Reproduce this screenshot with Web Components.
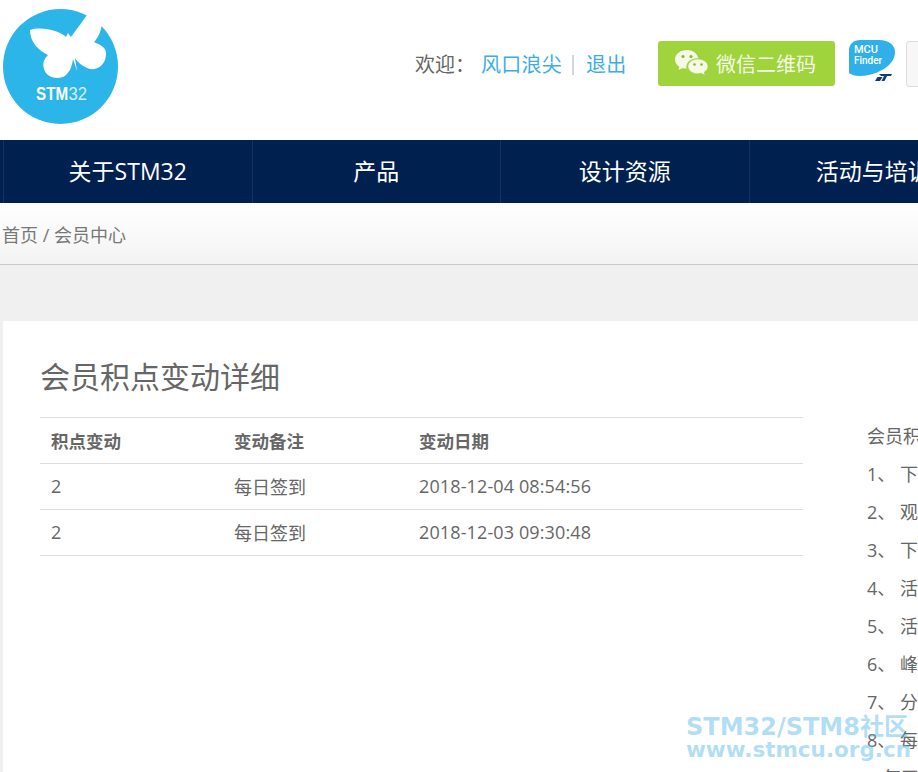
<!DOCTYPE html>
<html lang="zh">
<head>
<meta charset="utf-8">
<title>会员积点变动详细</title>
<style>
  html, body { margin: 0; height: 772px; overflow: hidden; background: #fff; }
  body { font-family: "Open Sans", "Noto Sans CJK SC", sans-serif; color: #666; }
</style>
</head>
<body>
<site-header></site-header>
<site-nav>
  <nav-item>关于STM32</nav-item>
  <nav-item>产品</nav-item>
  <nav-item>设计资源</nav-item>
  <nav-item>活动与培训</nav-item>
</site-nav>
<bread-crumb>首页 / 会员中心</bread-crumb>
<page-body>
  <points-table title="会员积点变动详细"></points-table>
  <points-rules></points-rules>
</page-body>
<water-mark></water-mark>

<script>
const headerTpl = document.createElement('template');
headerTpl.innerHTML = `
  <style>
    :host { display: flex; height: 140px; width: 1240px; align-items: flex-start; }
    .logo { display: block; width: 115px; height: 115px; margin: 9px 0 0 3px; flex: none; }
    .logo text { font-family: "Liberation Sans", sans-serif; font-size: 19px; fill: #fff; }
    .user { margin: 48px 0 0 297px; font-size: 20px; line-height: 34px; height: 34px; display: flex; color: #666; white-space: nowrap; width: 243px; flex: none; }
    .user a { color: #3dade3; letter-spacing: .25px; }
    .user .name { margin-left: 6px; }
    .user .sep { width: 2px; height: 20px; background: #d3d6e0; margin: 7px 12px 0 10px; }
    .wx { margin-top: 41px; width: 177px; height: 45px; flex: none; background: #9fd43c; border-radius: 3px; color: #f4fae6; font-size: 20px; display: flex; align-items: center; box-sizing: border-box; padding-left: 17px; gap: 6px; white-space: nowrap; }
    .mcu { display: block; width: 46px; height: 44px; margin: 40px 0 0 14px; flex: none; }
    .mcu text { font-family: Roboto, sans-serif; font-weight: 500; fill: #fff; }
    .search { margin: 41px 0 0 11px; width: 200px; height: 46px; box-sizing: border-box; border: 1px solid #ddd; border-radius: 3px; background: #f7f7f7; flex: none; }
  </style>
  <svg class="logo" viewBox="3 9 115 115">
    <circle cx="60.5" cy="66.5" r="57.5" fill="#2bb5e8"/>
    <path fill="#fff" d="M30 30C42 26 60 31 66 37L68 33L71 37C76 30 82 22 87 15L102 23C101 32 98 38 94 42C101 45 107 48 106 55C105 66 97 70 90 69C84 67 78 63 75 58L77 71L73 59C72 67 69 74 63 77C54 80 46 76 44 69C42 62 45 58 48 55C38 50 30 42 30 30Z"/>
    <g transform="translate(36 100) scale(.8 1)"><text font-weight="bold">STM</text></g>
    <g transform="translate(68.500 100) scale(.88 1)"><text opacity=".8">32</text></g>
  </svg>
  <div class="user"><span>欢迎：</span><a class="name">风口浪尖</a><span class="sep"></span><a>退出</a></div>
  <div class="wx">
    <svg width="35" height="27" viewBox="0 0 35 27">
      <path fill="#f4fae6" d="M12 0C5.500 0 0 4 0 9.500C0 12.500 1.700 15 4.300 16.700L3.500 20L7.500 18C8.800 18.400 10.200 18.600 11.600 18.600C11.500 18 11.400 17.500 11.400 16.900C11.400 12 16 8.300 22.500 8.300L23.500 8.400C22.300 3.500 17.500 0 12 0Z"/>
      <path fill="#f4fae6" stroke="#9fd43c" stroke-width=".6" d="M22.800 9C17.300 9 13 12.400 13 16.400C13 20.400 17.300 23.800 22.800 23.800C24 23.800 25.200 23.600 26.300 23.300L30 25.300L29.200 22.200C31.500 20.700 33 18.700 33 16.400C33 12.400 28.300 9 22.800 9Z"/>
      <circle cx="8" cy="6.500" r="1.600" fill="#8ab82f"/><circle cx="16" cy="6.500" r="1.600" fill="#8ab82f"/>
      <circle cx="19.500" cy="14.500" r="1.300" fill="#8ab82f"/><circle cx="26.500" cy="14.500" r="1.300" fill="#8ab82f"/>
    </svg>
    <span>微信二维码</span>
  </div>
  <svg class="mcu" viewBox="0 0 46 44">
    <path fill="#2fb0ea" d="M0 10C0 4 5 0 11 0L30 0C40 0 46 5 46 12C46 20 40 26 33 30C26 34 18 36 10 36C6 36 3 35 0 33Z"/>
    <text x="5" y="13" font-size="11">MCU</text>
    <text x="5" y="24" font-size="10">Finder</text>
    <path fill="#0f3c78" d="M30 34L43 34L42 36L38 36L35.500 41L32.500 41L35 36L32 36ZM26 41L28.500 37L33.500 37L31 41Z"/>
  </svg>
  <div class="search"></div>
`;
class SiteHeader extends HTMLElement {
  constructor() {
    super();
    this.attachShadow({ mode: 'open' });
    this.shadowRoot.appendChild(headerTpl.content.cloneNode(true));
  }
}
customElements.define('site-header', SiteHeader);

class SiteNav extends HTMLElement {
  constructor() {
    super();
    this.attachShadow({ mode: 'open' }).innerHTML = `
      <style>
        :host { display: flex; height: 63px; width: 1240px; background: #002050; box-sizing: border-box; padding-left: 3px; }
      </style>
      <slot></slot>`;
  }
}
customElements.define('site-nav', SiteNav);

class NavItem extends HTMLElement {
  constructor() {
    super();
    this.attachShadow({ mode: 'open' }).innerHTML = `
      <style>
        :host { display: flex; align-items: center; justify-content: center; width: 248.500px; box-sizing: border-box; border-left: 1px solid #0d3563; color: #fff; font-size: 23px; padding-bottom: 3px; white-space: nowrap; }
      </style>
      <slot></slot>`;
  }
}
customElements.define('nav-item', NavItem);

class BreadCrumb extends HTMLElement {
  constructor() {
    super();
    this.attachShadow({ mode: 'open' }).innerHTML = `
      <style>
        :host { display: flex; align-items: center; height: 62px; box-sizing: border-box; padding: 0 0 0 2px; border-bottom: 1px solid #c8c8c8; background: linear-gradient(#fff, #f3f3f3); font-size: 18px; color: #777; }
      </style>
      <slot></slot>`;
  }
}
customElements.define('bread-crumb', BreadCrumb);

class PageBody extends HTMLElement {
  constructor() {
    super();
    this.attachShadow({ mode: 'open' }).innerHTML = `
      <style>
        :host { display: block; background: #f0f0f0; padding: 56px 0 0 3px; width: 1240px; height: 600px; box-sizing: border-box; }
        .card { display: flex; background: #fff; height: 100%; padding: 0 0 0 37px; }
      </style>
      <div class="card"><slot></slot></div>`;
  }
}
customElements.define('page-body', PageBody);

class PointsTable extends HTMLElement {
  constructor() {
    super();
    this.attachShadow({ mode: 'open' }).innerHTML = `
      <style>
        :host { display: block; width: 763px; flex: none; color: #666; }
        h2 { margin: 0; height: 96px; box-sizing: border-box; padding-top: 33px; font-size: 30px; line-height: 46px; font-weight: 400; color: #666; }
        .row { display: grid; grid-template-columns: 183px 185px 1fr; border-top: 1px solid #ddd; height: 46px; box-sizing: border-box; padding: 0 0 2px 11px; align-items: center; font-size: 18px; }
        .row:last-child { border-bottom: 1px solid #ddd; height: 47px; }
        .head { font-weight: 700; font-size: 17.500px; padding-bottom: 0; }
        .date { letter-spacing: .12px; }
      </style>
      <h2>${this.getAttribute('title')}</h2>
      <div class="row head"><span>积点变动</span><span>变动备注</span><span>变动日期</span></div>
      <div class="row"><span>2</span><span>每日签到</span><span class="date">2018-12-04 08:54:56</span></div>
      <div class="row"><span>2</span><span>每日签到</span><span class="date">2018-12-03 09:30:48</span></div>`;
  }
}
customElements.define('points-table', PointsTable);

class PointsRules extends HTMLElement {
  constructor() {
    super();
    const lines = ['会员积点规则', '1、 下载资料', '2、 观看视频', '3、 下载软件', '4、 活动报名', '5、 活动签到', '6、 峰会参与', '7、 分享内容', '8、 每日签到', '每天'];
    this.attachShadow({ mode: 'open' }).innerHTML = `
      <style>
        :host { display: block; margin: 96px 0 0 64px; font-size: 18px; color: #666; white-space: nowrap; }
        div { height: 38px; line-height: 38px; }
        .last { padding-left: 16px; }
      </style>
      ${lines.map((l, i) => `<div class="${i === 9 ? 'last' : ''}">${l}</div>`).join('')}`;
  }
}
customElements.define('points-rules', PointsRules);

class WaterMark extends HTMLElement {
  constructor() {
    super();
    this.attachShadow({ mode: 'open' }).innerHTML = `
      <style>
        :host { display: block; position: absolute; left: 686px; top: 714px; color: rgba(90, 185, 235, .48); font-family: "DejaVu Sans", "Noto Sans CJK SC", sans-serif; font-weight: 700; pointer-events: none; white-space: nowrap; }
        div { font-size: 24px; line-height: 26px; }
        div + div { font-size: 21.500px; line-height: 20px; }
      </style>
      <div>STM32/STM8社区</div>
      <div>www.stmcu.org.cn</div>`;
  }
}
customElements.define('water-mark', WaterMark);
</script>
</body>
</html>
